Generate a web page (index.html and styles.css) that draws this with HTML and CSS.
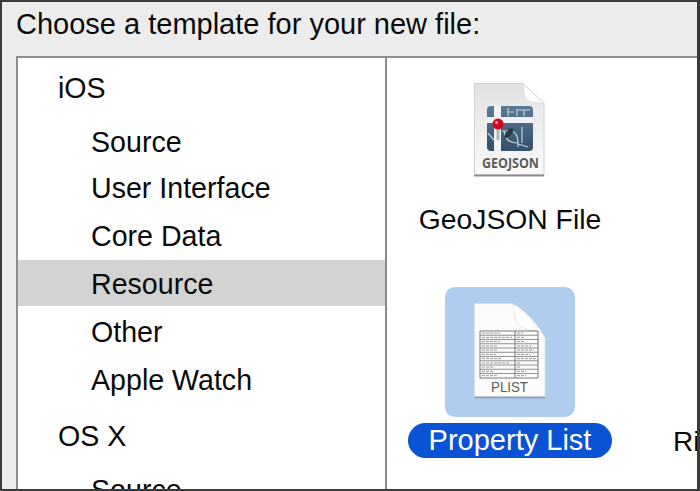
FILE: index.html
```html
<!DOCTYPE html>
<html lang="en">
<head>
    <meta charset="UTF-8">
    <title>Choose a template</title>
    <link rel="stylesheet" href="styles.css">
</head>
<body>
    <div class="sheet">
        <h1 class="prompt">Choose a template for your new file:</h1>
        <div class="chooser">
            <ul class="sidebar">
                <li class="group first">iOS</li>
                <li class="item first-item">Source</li>
                <li class="item tight">User Interface</li>
                <li class="item">Core Data</li>
                <li class="item selected">Resource</li>
                <li class="item">Other</li>
                <li class="item">Apple Watch</li>
                <li class="group">OS X</li>
                <li class="item first-item">Source</li>
            </ul>
            <div class="templates">
                <div class="template geojson">
                    <div class="icon-box">
                        <svg width="72" height="94" viewBox="0 0 72 94">
                            <defs>
                                <linearGradient id="page" x1="0" y1="0" x2="0" y2="1">
                                    <stop offset="0" stop-color="#e2e2e2"/>
                                    <stop offset="0.75" stop-color="#f4f4f4"/>
                                    <stop offset="1" stop-color="#fafafa"/>
                                </linearGradient>
                                <linearGradient id="tile" x1="0" y1="0" x2="0" y2="1">
                                    <stop offset="0" stop-color="#5a7a96"/>
                                    <stop offset="1" stop-color="#33506c"/>
                                </linearGradient>
                            </defs>
                            <path d="M0.5 0.5H49C54 6 64 14 70 20V92H0.5Z" fill="url(#page)" stroke="#d0d0d0"/>
                            <path d="M0 92.5H70" stroke="#8c8c8c" stroke-width="2"/>
                            <path d="M49 0.5C50 8 50 14 53 17C57 20 64 20 70 20C64 14 54 6 49 0.5Z" fill="#fff" stroke="#d2d2d2" stroke-width="0.7"/>
                            <rect x="13" y="23" width="46" height="45" rx="4" fill="url(#tile)"/>
                            <path d="M13 34H59V40H13ZM20 23H27V68H20Z" fill="#f0f2f4"/>
                            <path d="M34 25V33M34 29H40M43 26V33M43 27H56M50 27V33M14 50L20 57M28 48H38C43 50 44 55 44 60V64M30 48C32 56 34 60 44 60M48 44V60M44 61L54 64" fill="none" stroke="#c6d1db" stroke-width="1.2"/>
                            <path d="M31 52C33 46 38 44 39 46C40 50 36 54 31 55Z" fill="#26384c"/>
                            <rect x="22.5" y="44" width="3" height="13" fill="#b5b5b5"/>
                            <circle cx="24" cy="41" r="5.5" fill="#d4061e"/>
                            <circle cx="22.5" cy="39.5" r="1.5" fill="#f6a4ac"/>
                            <text class="doc-label bold" x="36.5" y="85" textLength="57" lengthAdjust="spacingAndGlyphs">GEOJSON</text>
                        </svg>
                    </div>
                    <div class="name">GeoJSON File</div>
                </div>
                <div class="template plist">
                    <div class="icon-box picked">
                        <svg width="72" height="96" viewBox="0 0 72 96">
                            <path d="M0.5 0.5H38C48 4 64 22 71 35V93.5H0.5Z" fill="#fbfbfb" stroke="#d8dee6" stroke-width="0.6"/>
                            <path d="M0 94.5H71" stroke="#8d9bab" stroke-width="1.6"/>
                            <path d="M39 1C41 8 40 16 43 20C49 27 60 28 68 29C62 20 50 7 39 1Z" fill="#fff" stroke="#d8d8d8" stroke-width="0.7"/>
                            <path d="M6 28H64V75H6ZM41 28V75" fill="none" stroke="#6a6a6a" stroke-width="0.9"/>
                            <path d="M6 32.25H64M6 36.5H64M6 40.75H64M6 45H64M6 49.25H64M6 53.5H64M6 57.75H64M6 62H64M6 66.25H64M6 70.5H64" stroke="#777" stroke-width="0.8"/>
                            <g class="cell-text">
                                <path d="M8 30.2H26M8 34.4H38M8 38.6H26M8 42.9H24M8 47.1H24M8 51.4H22M8 55.6H28M8 59.9H36M8 64.1H20M8 68.4H20M8 72.6H24"/>
                                <path d="M43 30.2H49M43 34.4H51M43 38.6H50M43 42.9H57M43 47.1H60M43 51.4H56M43 55.6H62M43 59.9H47M43 64.1H47M43 68.4H52M43 72.6H52"/>
                            </g>
                            <text class="doc-label" x="35.5" y="89" textLength="37" lengthAdjust="spacingAndGlyphs">PLIST</text>
                        </svg>
                    </div>
                    <div class="name picked-name">Property List</div>
                </div>
            </div>
            <div class="next-col">
                <div class="name next-name">Ri</div>
            </div>
        </div>
    </div>
</body>
</html>
```

FILE: styles.css
```css
html, body {
    margin: 0;
    height: 100%;
    overflow: hidden;
}
body {
    font-family: "Liberation Sans", Arial, sans-serif;
    color: #0a0a0a;
}
.sheet {
    box-sizing: border-box;
    width: 700px;
    height: 491px;
    background-color: #ececec;
    border: 2px solid #3a3a3a;
    border-right-width: 3px;
    padding-left: 14px;
    overflow: hidden;
    display: flex;
    flex-direction: column;
}
.prompt {
    margin: 0;
    padding-top: 7px;
    height: 54px;
    box-sizing: border-box;
    flex: none;
    font-size: 29px;
    line-height: 31px;
    font-weight: normal;
}
.chooser {
    flex: 1;
    min-height: 0;
    display: flex;
    background-color: #fff;
    border-top: 2px solid #8e8e8e;
    border-left: 2px solid #8e8e8e;
    overflow: hidden;
}
.sidebar {
    list-style: none;
    margin: 0;
    padding: 0;
    width: 367px;
    flex: none;
    border-right: 2px solid #8a8a8a;
    font-size: 28.6px;
}
.group {
    height: 48px;
    line-height: 48px;
    padding-left: 40px;
    margin-top: 8px;
}
.group.first {
    margin-top: 6px;
}
.item {
    height: 48px;
    line-height: 48px;
    padding-left: 73px;
}
.first-item {
    margin-top: 6px;
}
.tight {
    margin-top: -2px;
}
.selected {
    height: 46px;
    margin-bottom: 2px;
    background-color: #d3d3d3;
}
.templates {
    width: 246px;
    flex: none;
    display: flex;
    flex-direction: column;
    align-items: center;
}
.template {
    display: flex;
    flex-direction: column;
    align-items: center;
}
.geojson {
    padding-top: 25px;
}
.geojson .name {
    margin-top: 25px;
    font-size: 28.3px;
}
.plist {
    margin-top: 50px;
}
.icon-box {
    display: flex;
    justify-content: center;
    align-items: center;
}
.picked {
    width: 130px;
    height: 130px;
    border-radius: 10px;
    background-color: #b0cdf0;
}
.picked svg {
    margin-bottom: 2px;
}
.name {
    font-size: 29px;
    line-height: 35px;
    white-space: nowrap;
}
.picked-name {
    margin-top: 6px;
    padding: 0 21px;
    border-radius: 18px;
    background-color: #0b52d4;
    color: #fff;
}
.next-col {
    padding-top: 366px;
    margin-left: 40px;
}
.next-name {
    font-size: 28px;
}
.doc-label {
    font-size: 15px;
    text-anchor: middle;
    fill: #5c5c5c;
}
.doc-label.bold {
    font-family: "Open Sans", "Liberation Sans", sans-serif;
    font-weight: bold;
    font-size: 14px;
}
.cell-text path {
    fill: none;
    stroke: #8f8f8f;
    stroke-width: 0.9;
    stroke-dasharray: 3 1;
}
```
